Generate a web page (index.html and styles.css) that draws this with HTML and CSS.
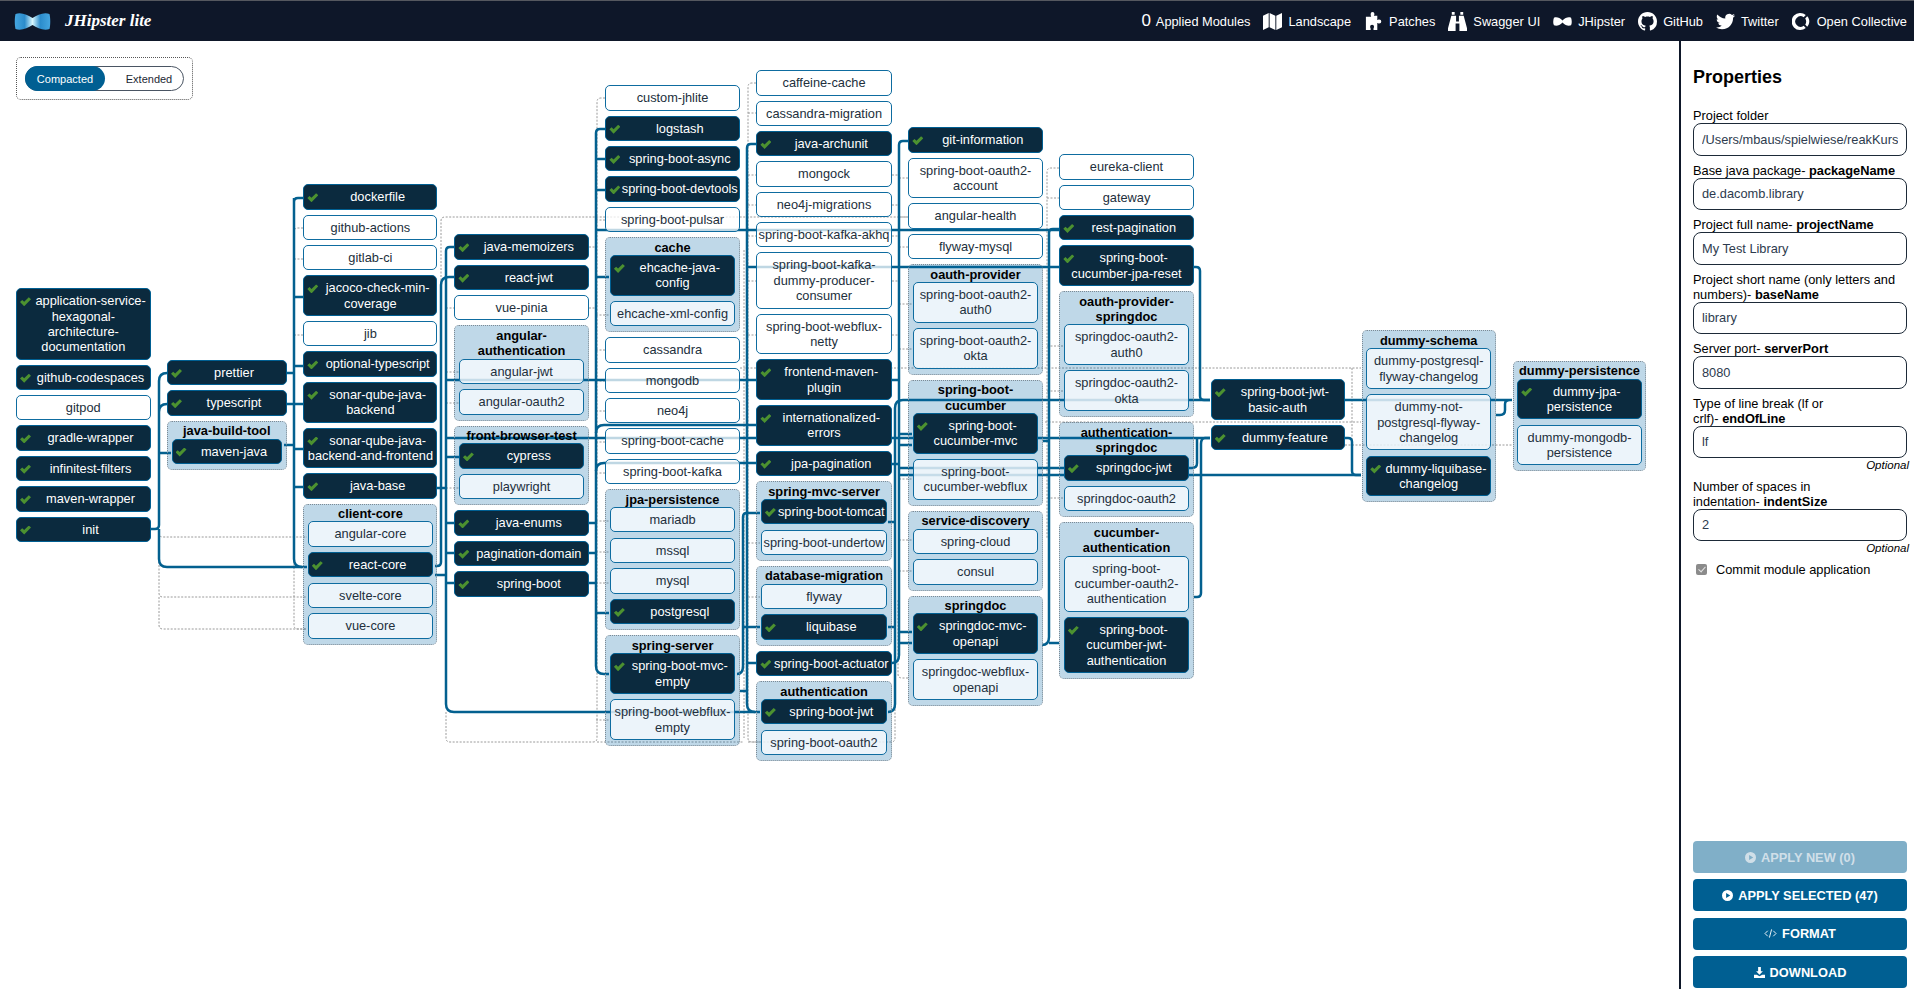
FILE: index.html
```html
<!DOCTYPE html>
<html lang="en">
<head>
  <meta charset="UTF-8">
  <meta name="viewport" content="width=device-width, initial-scale=1.0">
  <title>JHipster lite</title>
  <link rel="stylesheet" href="styles.css">
</head>
<body>
  <header class="topbar">
    <a class="brand">
      <svg class="brand-logo" viewBox="0 0 36 17">
        <defs>
          <linearGradient id="bow" x1="0" x2="1" y1="0" y2="0">
            <stop offset="0" stop-color="#45a6e0"/>
            <stop offset=".28" stop-color="#2b8ccc"/>
            <stop offset=".5" stop-color="#d8f7fd"/>
            <stop offset=".72" stop-color="#2b8ccc"/>
            <stop offset="1" stop-color="#45a6e0"/>
          </linearGradient>
        </defs>
        <path fill="url(#bow)" d="M1 1C7 -1 13 2 18 5C23 2 29 -1 35 1C36 5 36 12 35 16C29 18 23 15 18 12C13 15 7 18 1 16C0 12 0 5 1 1Z"/>
      </svg>
      <span class="brand-name">JHipster lite</span>
    </a>
    <nav class="topnav">
      <a class="topnav-item"><span class="applied-count">0</span>Applied Modules</a>
      <a class="topnav-item">
        <svg class="nav-icon" viewBox="0 0 20 20"><path d="M0 4l6-3v15l-6 3zM7 1l6 3v15l-6-3zM14 4l6-3v15l-6 3z"/></svg>Landscape</a>
      <a class="topnav-item">
        <svg class="nav-icon" viewBox="0 0 20 20"><path d="M7 2a2 2 0 0 1 4 0c0 1-.6 1.3-.6 2H14v4.4c.7 0 1-.6 2-.6a2 2 0 0 1 0 4.4c-1 0-1.3-.6-2-.6V19H10v-1.600c0-.7.6-1 .6-2a2 2 0 0 0-4.200 0c0 1 .6 1.300.6 2V19H2V5h5.600C7.600 4.300 7 4 7 2z"/></svg>Patches</a>
      <a class="topnav-item">
        <svg class="nav-icon" viewBox="0 0 20 20"><path d="M4 0h3v3H4zM13 0h3v3h-3zM3.500 4H8.500v6h3V4h5L20 17v3h-8v-8H8v8H0v-3z"/></svg>Swagger UI</a>
      <a class="topnav-item">
        <svg class="nav-icon" viewBox="0 0 20 12"><path d="M1 2c3-1 6 0 9 3c3-3 6-4 9-3c1 3 1 6 0 8c-3 1-6 0-9-3c-3 3-6 4-9 3c-1-2-1-5 0-8z"/></svg>JHipster</a>
      <a class="topnav-item">
        <svg class="nav-icon" viewBox="0 0 16 16"><path d="M8 0C3.580 0 0 3.580 0 8c0 3.540 2.290 6.530 5.470 7.590.4.07.55-.17.55-.38 0-.19-.01-.82-.01-1.490-2.010.37-2.530-.49-2.690-.94-.09-.23-.48-.94-.82-1.130-.28-.15-.68-.52-.01-.53.63-.01 1.080.58 1.230.82.72 1.210 1.870.87 2.330.66.07-.52.28-.87.51-1.070-1.780-.2-3.640-.89-3.640-3.950 0-.87.31-1.590.82-2.150-.08-.2-.36-1.020.08-2.120 0 0 .67-.21 2.200.82.64-.18 1.320-.27 2-.27.68 0 1.360.09 2 .27 1.530-1.040 2.200-.82 2.200-.82.44 1.100.16 1.920.08 2.120.51.56.82 1.270.82 2.150 0 3.070-1.870 3.750-3.650 3.950.29.25.54.73.54 1.480 0 1.070-.01 1.930-.01 2.200 0 .21.15.46.55.38A8.013 8.013 0 0 0 16 8c0-4.420-3.580-8-8-8z"/></svg>GitHub</a>
      <a class="topnav-item">
        <svg class="nav-icon" viewBox="0 0 24 24"><path d="M23.953 4.570a10 10 0 0 1-2.825.775 4.958 4.958 0 0 0 2.163-2.723c-.951.555-2.005.959-3.127 1.184a4.920 4.920 0 0 0-8.384 4.482C7.690 8.095 4.067 6.130 1.640 3.162a4.822 4.822 0 0 0-.666 2.475c0 1.710.870 3.213 2.188 4.096a4.904 4.904 0 0 1-2.228-.616v.06a4.923 4.923 0 0 0 3.946 4.827 4.996 4.996 0 0 1-2.212.085 4.936 4.936 0 0 0 4.604 3.417 9.867 9.867 0 0 1-6.102 2.105c-.39 0-.779-.023-1.170-.067a13.995 13.995 0 0 0 7.557 2.209c9.053 0 13.998-7.496 13.998-13.985 0-.21 0-.42-.015-.63A9.935 9.935 0 0 0 24 4.590z"/></svg>Twitter</a>
      <a class="topnav-item">
        <svg class="nav-icon" viewBox="0 0 20 20"><path d="M14.500 3.200A9 9 0 1 0 14.500 16.800L12.300 14.400A5.500 5.500 0 1 1 12.300 5.600z"/><path d="M16 4.600C19 7.500 19 12.500 16 15.400L13.900 13.200C15.300 11.500 15.300 8.500 13.900 6.800z"/></svg>Open Collective</a>
    </nav>
  </header>

  <main class="workspace">
    <section class="canvas">
      <div class="rank-toggle">
        <div class="toggle">
          <span class="toggle-option toggle-on">Compacted</span>
          <span class="toggle-option">Extended</span>
        </div>
      </div>

      <svg class="links" viewBox="0 41 1679 948">
        <g class="links-off">
          <path d="M159 529V533Q159 537 163 537H307M159 537V593Q159 597 163 597H307M159 597V625Q159 629 163 629H307"/>
          <path d="M303 228H298Q294 228 294 232V625Q294 629 298 629H307M294 259H303M294 335H303"/>
          <path d="M441 410V221Q441 217 445 217H908M446 308H454M446 372H459M446 403H459M446 488H459M589 247H596M589 308H596"/>
          <path d="M605 98H601Q597 98 597 102V738Q597 742 593 742H450Q446 742 446 738V712M597 742H744"/>
          <path d="M596 220H605M596 315H609M596 350H605M596 381H605M596 411H605M596 442H605M596 473H605M596 521H609M596 552H609M596 583H609M596 720H609"/>
          <path d="M756 83H752Q748 83 748 87V738Q748 742 752 742H891Q895 742 895 738V500"/>
          <path d="M748 113H756M748 175H756M748 205H756M748 236H756M748 281H756M748 335H756M748 543H760M748 597H760M748 742H760"/>
          <path d="M744 250V738M892 175H899M892 205H899M892 236H899M892 281H899M892 335H899"/>
          <path d="M899 178H908M899 217H908M899 247H908M899 304H912M899 349H912M899 479H912M899 540H912M899 571H912"/>
          <path d="M908 678H902Q898 678 898 674V600"/>
          <path d="M1059 168H1051Q1047 168 1047 172V538M1047 198H1059M1047 346H1063M1047 391H1063M1047 498H1063"/>
          <path d="M740 368H1361M1045 422H1361M1345 445H1512M1352 368V445"/>
        </g>
        <g class="links-on">
          <path d="M151 529H155Q159 529 159 525V381Q159 373 167 373M159 412Q159 404 167 404M159 453H171M159 529V559Q159 567 167 567H307"/>
          <path d="M286 373H294M294 198V559Q294 567 302 567M303 198H298Q294 198 294 202M294 297H303M294 366H303M286 404H303M284 445H294M294 449H303M294 487H303"/>
          <path d="M435 566H437Q441 566 441 562V285Q441 277 449 277H454"/>
          <path d="M454 247H450Q446 247 446 251V704Q446 712 454 712H760M446 380H756M446 438H1210M446 457H459M446 523H454M446 553H454M446 583H454M437 488H446M435 575H446"/>
          <path d="M605 129H600Q596 129 596 133V666Q596 674 604 674H609M596 159H605M596 190H605M596 230H1059M596 277H609M596 613H609"/>
          <path d="M596 433Q596 425 604 425H756M596 471Q596 463 604 463H756M589 523H596M589 553H596M589 583H596"/>
          <path d="M756 144H751Q747 144 747 148V704Q747 712 755 712M747 267H1059M747 663H756M740 691H747"/>
          <path d="M760 513H747Q743 513 743 517V666Q743 674 737 674M743 627H760"/>
          <path d="M908 141H903Q899 141 899 145V655Q899 663 892 663M899 434H912M899 445H912M899 468H1064M899 475H1361M899 632H912M899 643H912M892 380H899M892 464H899M888 522H895M888 627H895"/>
          <path d="M1210 400H903Q895 400 895 408V704Q895 712 888 712"/>
          <path d="M1059 229H1053Q1049 229 1049 233V637Q1049 645 1042 645M1049 643H1059M1043 441H1049"/>
          <path d="M1194 267H1196Q1200 267 1200 271V396Q1200 400 1204 400H1210"/>
          <path d="M1194 597H1197Q1201 597 1201 593V444Q1201 438 1205 438H1210M1183 468H1192Q1197 468 1197 463V438"/>
          <path d="M1345 400H1512M1345 438H1348Q1352 438 1352 442V471Q1352 475 1356 475H1361M1496 415H1500Q1505 415 1505 410V404Q1505 400 1510 400"/>
        </g>
      </svg>

      <div class="col col-1">
        <div class="node on">application-service-hexagonal-architecture-documentation</div>
        <div class="node on">github-codespaces</div>
        <div class="node">gitpod</div>
        <div class="node on">gradle-wrapper</div>
        <div class="node on">infinitest-filters</div>
        <div class="node on">maven-wrapper</div>
        <div class="node on">init</div>
      </div>

      <div class="col col-2">
        <div class="node on">prettier</div>
        <div class="node on">typescript</div>
        <div class="group">
          <div class="group-title">java-build-tool</div>
          <div class="node on">maven-java</div>
        </div>
      </div>

      <div class="col col-3">
        <div class="node on">dockerfile</div>
        <div class="node">github-actions</div>
        <div class="node">gitlab-ci</div>
        <div class="node on">jacoco-check-min-coverage</div>
        <div class="node">jib</div>
        <div class="node on">optional-typescript</div>
        <div class="node on">sonar-qube-java-backend</div>
        <div class="node on">sonar-qube-java-backend-and-frontend</div>
        <div class="node on">java-base</div>
        <div class="group">
          <div class="group-title">client-core</div>
          <div class="node">angular-core</div>
          <div class="node on">react-core</div>
          <div class="node">svelte-core</div>
          <div class="node">vue-core</div>
        </div>
      </div>

      <div class="col col-4">
        <div class="node on">java-memoizers</div>
        <div class="node on">react-jwt</div>
        <div class="node">vue-pinia</div>
        <div class="group">
          <div class="group-title">angular-authentication</div>
          <div class="node">angular-jwt</div>
          <div class="node">angular-oauth2</div>
        </div>
        <div class="group">
          <div class="group-title">front-browser-test</div>
          <div class="node on">cypress</div>
          <div class="node">playwright</div>
        </div>
        <div class="node on">java-enums</div>
        <div class="node on">pagination-domain</div>
        <div class="node on">spring-boot</div>
      </div>

      <div class="col col-5">
        <div class="node">custom-jhlite</div>
        <div class="node on">logstash</div>
        <div class="node on">spring-boot-async</div>
        <div class="node on">spring-boot-devtools</div>
        <div class="node">spring-boot-pulsar</div>
        <div class="group">
          <div class="group-title">cache</div>
          <div class="node on">ehcache-java-config</div>
          <div class="node">ehcache-xml-config</div>
        </div>
        <div class="node">cassandra</div>
        <div class="node">mongodb</div>
        <div class="node">neo4j</div>
        <div class="node">spring-boot-cache</div>
        <div class="node">spring-boot-kafka</div>
        <div class="group">
          <div class="group-title">jpa-persistence</div>
          <div class="node">mariadb</div>
          <div class="node">mssql</div>
          <div class="node">mysql</div>
          <div class="node on">postgresql</div>
        </div>
        <div class="group">
          <div class="group-title">spring-server</div>
          <div class="node on">spring-boot-mvc-empty</div>
          <div class="node">spring-boot-webflux-empty</div>
        </div>
      </div>

      <div class="col col-6">
        <div class="node">caffeine-cache</div>
        <div class="node">cassandra-migration</div>
        <div class="node on">java-archunit</div>
        <div class="node">mongock</div>
        <div class="node">neo4j-migrations</div>
        <div class="node">spring-boot-kafka-akhq</div>
        <div class="node">spring-boot-kafka-dummy-producer-consumer</div>
        <div class="node">spring-boot-webflux-netty</div>
        <div class="node on">frontend-maven-plugin</div>
        <div class="node on">internationalized-errors</div>
        <div class="node on">jpa-pagination</div>
        <div class="group">
          <div class="group-title">spring-mvc-server</div>
          <div class="node on">spring-boot-tomcat</div>
          <div class="node">spring-boot-undertow</div>
        </div>
        <div class="group">
          <div class="group-title">database-migration</div>
          <div class="node">flyway</div>
          <div class="node on">liquibase</div>
        </div>
        <div class="node on">spring-boot-actuator</div>
        <div class="group">
          <div class="group-title">authentication</div>
          <div class="node on">spring-boot-jwt</div>
          <div class="node">spring-boot-oauth2</div>
        </div>
      </div>

      <div class="col col-7">
        <div class="node on">git-information</div>
        <div class="node">spring-boot-oauth2-account</div>
        <div class="node">angular-health</div>
        <div class="node">flyway-mysql</div>
        <div class="group">
          <div class="group-title">oauth-provider</div>
          <div class="node">spring-boot-oauth2-auth0</div>
          <div class="node">spring-boot-oauth2-okta</div>
        </div>
        <div class="group">
          <div class="group-title">spring-boot-cucumber</div>
          <div class="node on">spring-boot-cucumber-mvc</div>
          <div class="node">spring-boot-cucumber-webflux</div>
        </div>
        <div class="group">
          <div class="group-title">service-discovery</div>
          <div class="node">spring-cloud</div>
          <div class="node">consul</div>
        </div>
        <div class="group">
          <div class="group-title">springdoc</div>
          <div class="node on">springdoc-mvc-openapi</div>
          <div class="node">springdoc-webflux-openapi</div>
        </div>
      </div>

      <div class="col col-8">
        <div class="node">eureka-client</div>
        <div class="node">gateway</div>
        <div class="node on">rest-pagination</div>
        <div class="node on">spring-boot-cucumber-jpa-reset</div>
        <div class="group">
          <div class="group-title">oauth-provider-springdoc</div>
          <div class="node">springdoc-oauth2-auth0</div>
          <div class="node">springdoc-oauth2-okta</div>
        </div>
        <div class="group">
          <div class="group-title">authentication-springdoc</div>
          <div class="node on">springdoc-jwt</div>
          <div class="node">springdoc-oauth2</div>
        </div>
        <div class="group">
          <div class="group-title">cucumber-authentication</div>
          <div class="node">spring-boot-cucumber-oauth2-authentication</div>
          <div class="node on">spring-boot-cucumber-jwt-authentication</div>
        </div>
      </div>

      <div class="col col-9">
        <div class="node on">spring-boot-jwt-basic-auth</div>
        <div class="node on">dummy-feature</div>
      </div>

      <div class="col col-10">
        <div class="group">
          <div class="group-title">dummy-schema</div>
          <div class="node">dummy-postgresql-flyway-changelog</div>
          <div class="node">dummy-not-postgresql-flyway-changelog</div>
          <div class="node on">dummy-liquibase-changelog</div>
        </div>
      </div>

      <div class="col col-11">
        <div class="group">
          <div class="group-title">dummy-persistence</div>
          <div class="node on">dummy-jpa-persistence</div>
          <div class="node">dummy-mongodb-persistence</div>
        </div>
      </div>
    </section>

    <aside class="properties">
      <h2 class="properties-title">Properties</h2>
      <div class="field">
        <label>Project folder</label>
        <input type="text" value="/Users/mbaus/spielwiese/reakKurs">
      </div>
      <div class="field">
        <label>Base java package- <b>packageName</b></label>
        <input type="text" value="de.dacomb.library">
      </div>
      <div class="field">
        <label>Project full name- <b>projectName</b></label>
        <input type="text" value="My Test Library">
      </div>
      <div class="field">
        <label>Project short name (only letters and numbers)- <b>baseName</b></label>
        <input type="text" value="library">
      </div>
      <div class="field">
        <label>Server port- <b>serverPort</b></label>
        <input type="text" value="8080">
      </div>
      <div class="field">
        <label>Type of line break (lf or<br>crlf)- <b>endOfLine</b></label>
        <input type="text" value="lf">
        <em class="optional">Optional</em>
      </div>
      <div class="field">
        <label>Number of spaces in<br>indentation- <b>indentSize</b></label>
        <input type="text" value="2">
        <em class="optional">Optional</em>
      </div>
      <label class="commit"><input type="checkbox" checked disabled>Commit module application</label>

      <div class="actions">
        <button class="btn btn-off">
          <svg class="btn-icon" viewBox="0 0 12 12"><path fill-rule="evenodd" d="M6 0a6 6 0 1 0 0 12A6 6 0 0 0 6 0zM4.500 3.200L9 6 4.500 8.800z"/></svg>APPLY NEW (0)</button>
        <button class="btn">
          <svg class="btn-icon" viewBox="0 0 12 12"><path fill-rule="evenodd" d="M6 0a6 6 0 1 0 0 12A6 6 0 0 0 6 0zM4.500 3.200L9 6 4.500 8.800z"/></svg>APPLY SELECTED (47)</button>
        <button class="btn">
          <svg class="btn-icon btn-icon-code" viewBox="0 0 14 12"><path d="M4 3L1 6l3 3M10 3l3 3-3 3M8.200 1.500L5.800 10.500"/></svg>FORMAT</button>
        <button class="btn">
          <svg class="btn-icon" viewBox="0 0 12 12"><path d="M4.500 0h3v4.500h2.200L6 8.500 2.300 4.500h2.200zM0 8.500h3L6 10.200 9 8.500h3V12H0z"/></svg>DOWNLOAD</button>
      </div>
    </aside>
  </main>
</body>
</html>
```

FILE: styles.css
```css
* { box-sizing: border-box; }
html, body { height: 100%; }
body { margin: 0; font-family: "Liberation Sans", Arial, sans-serif; color: #000; background: #fff; overflow: hidden; }

/* top bar */
.topbar { height: 41px; display: flex; align-items: center; justify-content: space-between; padding: 0 7px 0 13px; background: #0e1729; border-top: 1px solid #55585f; color: #fff; }
.brand { display: flex; align-items: center; gap: 13px; }
.brand-logo { width: 39px; height: 17px; display: block; }
.brand-name { font-family: "Liberation Serif", serif; font-style: italic; font-weight: 700; font-size: 17px; }
.topnav { display: flex; align-items: center; gap: 13px; }
.topnav-item { display: flex; align-items: center; gap: 6px; font-size: 12.8px; }
.applied-count { font-size: 17px; margin-right: -1px; }
.nav-icon { height: 19px; width: 19px; fill: #fff; display: block; }

/* page body */
.workspace { display: flex; height: 948px; }
.canvas { flex: 1; position: relative; overflow: hidden; }
.properties { width: 235px; flex: none; border-left: 2px solid #0e1729; padding: 25px 7px 0 12px; display: flex; flex-direction: column; position: relative; }

/* view toggle */
.rank-toggle { position: absolute; left: 16px; top: 16px; width: 177px; height: 43px; padding: 8px; border: 1px dotted #555; border-radius: 5px; }
.toggle { display: flex; height: 25px; border: 1px solid #4a5563; border-radius: 13px; font-size: 11px; }
.toggle-option { flex: 1; display: flex; align-items: center; justify-content: center; padding-left: 10px; color: #1c2733; }
.toggle-on { flex: none; width: 80px; margin: -1px 0 -1px -1px; padding: 0; background: #005f92; color: #fff; border-radius: 13px; }

/* module graph */
.links { position: absolute; left: 0; top: 0; width: 1679px; height: 948px; }
.links path { fill: none; }
.links-on path { stroke: #03608f; stroke-width: 2.5; }
.links-off path { stroke: #9a9a9a; stroke-width: 1; stroke-dasharray: 2 1.500; }

.col { position: absolute; display: flex; flex-direction: column; gap: 5px; }
.col-1 { left: 16px; top: 247.3px; width: 134.6px; }
.col-2 { left: 167px; top: 319px; width: 119.5px; }
.col-3 { left: 303.3px; top: 143.3px; width: 134.2px; }
.col-4 { left: 454.4px; top: 193.3px; width: 134.4px; }
.col-5 { left: 605.4px; top: 44.3px; width: 134.3px; }
.col-6 { left: 756.4px; top: 29.3px; width: 135.3px; }
.col-7 { left: 908.3px; top: 86.3px; width: 134.4px; }
.col-8 { left: 1059.3px; top: 113.3px; width: 134.4px; }
.col-9 { left: 1210.7px; top: 338.3px; width: 134px; }
.col-10 { left: 1361.7px; top: 289.3px; width: 134px; }
.col-11 { left: 1512.7px; top: 319.7px; width: 133.6px; }

.node { padding: 4px 0; border: 1px solid #0e6ca0; border-radius: 5px; background: rgba(255, 255, 255, .75); font-size: 12.8px; line-height: 15.36px; text-align: center; color: #222f3c; }
.node.on { background: #0b2a3e; border-color: #005f92; color: #fff; }
.node.on::before { content: ""; float: left; width: 11px; height: 9px; margin: 4px .5px 0 3px; background: #4c9130; clip-path: polygon(0 52%, 20% 30%, 38% 50%, 80% 0, 100% 22%, 38% 100%); }

.group { padding: 1.500px 3.500px 5px; border: 1px dotted #7d8a94; border-radius: 5px; background: rgba(0, 100, 165, .25); display: flex; flex-direction: column; gap: 5.300px; }
.group-title { margin-bottom: -5.300px; font-size: 12.8px; font-weight: 700; line-height: 15.36px; text-align: center; color: #000; }
.group .node { background: rgba(247, 251, 254, .8); }
.group .node.on { background: #0b2a3e; }

/* properties form */
.properties-title { margin: 0 0 20px; font-size: 18px; line-height: 22px; font-weight: 700; }
.field { margin-bottom: 7px; }
.field label { display: block; font-size: 12.8px; line-height: 15px; }
.field input { display: block; width: 100%; height: 32.500px; padding: 0 8px; border: 1px solid #1d2a38; border-radius: 8px; font: 12.8px "Liberation Sans", Arial, sans-serif; color: #2d3b4e; background: #fff; }
.optional { display: block; text-align: right; font-size: 11.5px; line-height: 15px; margin: 0 -2px -1.500px 0; }
.commit { display: flex; align-items: center; gap: 9px; font-size: 12.8px; line-height: 15px; padding-left: 3px; }
.commit input { appearance: none; width: 11px; height: 11px; margin: 0; background: #8b8b8b; border-radius: 2px; position: relative; }
.commit input::after { content: ""; position: absolute; left: 3.500px; top: 1px; width: 3px; height: 6px; border: solid #e4e4e4; border-width: 0 1.500px 1.500px 0; transform: rotate(42deg); }

.actions { position: absolute; left: 12px; right: 7px; bottom: 1px; display: flex; flex-direction: column; gap: 6.300px; }
.btn { height: 32px; display: flex; align-items: center; justify-content: center; gap: 5px; border: none; border-radius: 4px; background: #005f92; color: #fff; font: 700 12.8px "Liberation Sans", Arial, sans-serif; }
.btn-off { background: #80afc8; color: #d0dfe8; }
.btn-icon { width: 11px; height: 11px; fill: currentColor; }
.btn-icon-code { width: 13px; fill: none; stroke: currentColor; stroke-width: 1; }
```
